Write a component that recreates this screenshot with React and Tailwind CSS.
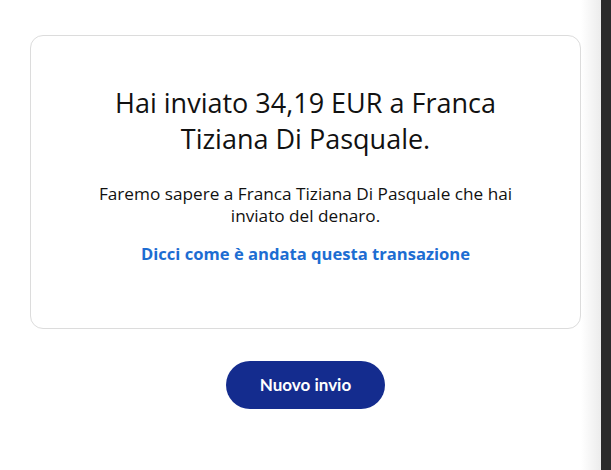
import React from "react";

export default function App() {
  return (
    <div className="relative w-[611px] h-[470px] bg-white overflow-hidden" style={{ fontFamily: '"Open Sans", "Noto Sans", sans-serif' }}>
      <div className="pt-[35px] px-[30px]">
        <div className="w-[551px] h-[294px] border border-[#dcdcdc] rounded-[13px] flex flex-col items-center pt-[49px]">
          <h1 className="text-[27px] leading-[36px] text-[#111111] text-center font-normal">
            Hai inviato 34,19 EUR a Franca
            <br />
            Tiziana Di Pasquale.
          </h1>
          <p className="mt-[26px] text-[17.2px] leading-[22px] text-[#111111] text-center">
            Faremo sapere a Franca Tiziana Di Pasquale che hai
            <br />
            inviato del denaro.
          </p>
          <a className="mt-[16px] text-[16.6px] leading-[22px] font-bold text-[#1d6dd2]">
            Dicci come è andata questa transazione
          </a>
        </div>
        <div className="flex justify-center mt-[32px]">
          <button className="w-[159px] h-[48px] rounded-full bg-[#142c8e] text-white text-[17px] font-bold" style={{ fontFamily: '"Lato", sans-serif' }}>
            Nuovo invio
          </button>
        </div>
      </div>
      <div className="absolute top-0 right-[10px] w-[20px] h-full bg-gradient-to-r from-transparent to-[#ececec]" />
      <div className="absolute top-0 right-0 w-[10px] h-full bg-[#2b2b2b]" />
    </div>
  );
}
